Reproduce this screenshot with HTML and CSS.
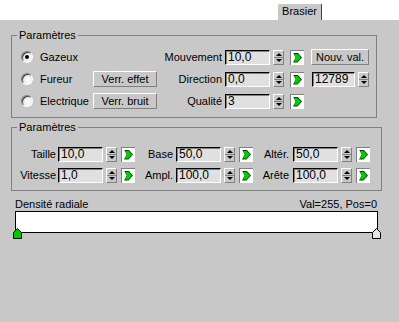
FILE: index.html
```html
<!DOCTYPE html>
<html lang="fr">
<head>
    <meta charset="UTF-8">
    <title>Brasier</title>
    <link rel="stylesheet" href="styles.css">
</head>
<body>

    <!-- Onglet -->
    <div class="tabs">
        <div class="tab">Brasier</div>
    </div>

    <div class="panel">
        <!-- Premier groupe : type et mouvement -->
        <fieldset class="group group-main">
            <legend>Paramètres</legend>
            <div class="row">
                <label class="radio checked"><span class="radio-mark"></span>Gazeux</label>
                <span class="btn-slot"></span>
                <span class="lbl lbl-main">Mouvement</span>
                <span class="field">10,0</span>
                <span class="spin"></span>
                <span class="key"></span>
                <button class="btn btn-new">Nouv. val.</button>
            </div>
            <div class="row">
                <label class="radio"><span class="radio-mark"></span>Fureur</label>
                <button class="btn btn-slot">Verr. effet</button>
                <span class="lbl lbl-main">Direction</span>
                <span class="field">0,0</span>
                <span class="spin"></span>
                <span class="key"></span>
                <span class="field field-seed">12789</span>
                <span class="spin"></span>
            </div>
            <div class="row">
                <label class="radio"><span class="radio-mark"></span>Electrique</label>
                <button class="btn btn-slot">Verr. bruit</button>
                <span class="lbl lbl-main">Qualité</span>
                <span class="field">3</span>
                <span class="spin"></span>
                <span class="key"></span>
            </div>
        </fieldset>

        <!-- Second groupe : tailles -->
        <fieldset class="group group-size">
            <legend>Paramètres</legend>
            <div class="row">
                <span class="lbl lbl-a">Taille</span>
                <span class="field">10,0</span>
                <span class="spin"></span>
                <span class="key"></span>
                <span class="lbl lbl-b">Base</span>
                <span class="field">50,0</span>
                <span class="spin"></span>
                <span class="key"></span>
                <span class="lbl lbl-c">Altér.</span>
                <span class="field">50,0</span>
                <span class="spin"></span>
                <span class="key"></span>
            </div>
            <div class="row">
                <span class="lbl lbl-a">Vitesse</span>
                <span class="field">1,0</span>
                <span class="spin"></span>
                <span class="key"></span>
                <span class="lbl lbl-b">Ampl.</span>
                <span class="field">100,0</span>
                <span class="spin"></span>
                <span class="key"></span>
                <span class="lbl lbl-c">Arête</span>
                <span class="field">100,0</span>
                <span class="spin"></span>
                <span class="key"></span>
            </div>
        </fieldset>

        <!-- Courbe de densité -->
        <div class="density">
            <div class="density-head">
                <span>Densité radiale</span>
                <span>Val=255, Pos=0</span>
            </div>
            <div class="gradient">
                <svg class="marker marker-left" width="9" height="11" viewBox="0 0 9 11">
                    <path d="M0.5 10.5 V4.5 L4.5 0.5 L8.5 4.5 V10.5 Z" fill="#00c800" stroke="#000"/>
                </svg>
                <svg class="marker marker-right" width="9" height="11" viewBox="0 0 9 11">
                    <path d="M0.5 10.5 V4.5 L4.5 0.5 L8.5 4.5 V10.5 Z" fill="#e4e4e4" stroke="#000"/>
                </svg>
            </div>
        </div>
    </div>

</body>
</html>
```

FILE: styles.css
```css
* {
    box-sizing: border-box;
}

body {
    margin: 0;
    background: #fff;
    font-family: "Liberation Sans", Arial, sans-serif;
    font-size: 11px;
    color: #000;
}

/* Onglet */
.tabs {
    height: 20px;
    padding-left: 277px;
    display: flex;
    align-items: flex-end;
}

.tab {
    width: 45px;
    height: 17px;
    background: #c8c8c8;
    border: 1px solid #fff;
    border-right-color: #404040;
    border-bottom: none;
    border-radius: 2px 2px 0 0;
    text-align: center;
    line-height: 15px;
}

.panel {
    height: 302px;
    background: #c8c8c8;
    padding: 9px 0 0 11px;
}

/* Groupes */
.group {
    margin: 0;
    border: 1px solid #808080;
    display: flex;
    flex-direction: column;
    gap: 5px;
}

.group legend {
    padding: 0 2px;
    line-height: 13px;
}

.group-main {
    width: 366px;
    padding: 7px 0 8px 9px;
    gap: 6px;
}

.group-main legend {
    margin-left: -4px;
}

.group-size {
    width: 371px;
    margin-top: 3px;
    padding: 12px 0 7px 0;
}

.group-size legend {
    margin-left: 5px;
}

.row {
    display: flex;
    align-items: center;
    height: 16px;
}

.lbl {
    text-align: right;
    white-space: nowrap;
}

.lbl-main {
    width: 65px;
    margin-right: 3px;
}

.lbl-a {
    width: 44px;
    margin-right: 2px;
}

.lbl-b {
    width: 37px;
    margin-left: 1px;
    margin-right: 3px;
}

.lbl-c {
    width: 35px;
    margin-left: 1px;
    margin-right: 4px;
}

/* Boutons radio */
.radio {
    width: 72px;
    display: flex;
    align-items: center;
    gap: 7px;
}

.radio-mark {
    width: 12px;
    height: 12px;
    border-radius: 50%;
    border: 1px solid;
    border-color: #808080 #fff #fff #808080;
    background: radial-gradient(circle at 60% 60%, #fff 0, #e8e8e8 60%, #d0d0d0 100%);
    box-shadow: inset 1px 1px 0 #404040;
    display: flex;
    align-items: center;
    justify-content: center;
}

.radio.checked .radio-mark::after {
    content: "";
    width: 4px;
    height: 4px;
    border-radius: 50%;
    background: #000;
}

/* Boutons */
.btn-slot {
    width: 64px;
}

.btn {
    height: 16px;
    padding: 0;
    font: inherit;
    color: #000;
    background: #c8c8c8;
    border: 1px solid;
    border-color: #fff #808080 #808080 #fff;
    line-height: 13px;
}

.btn-new {
    width: 58px;
    margin-left: 7px;
}

/* Champs numériques */
.field {
    width: 45px;
    height: 15px;
    padding-left: 2px;
    background: #e0e0e0;
    border: 1px solid;
    border-color: #000 #fff #fff #000;
    box-shadow: inset 1px 1px 0 #808080;
    font-size: 12px;
    line-height: 13px;
}

.field-seed {
    width: 43px;
    margin-left: 8px;
}

.spin {
    width: 11px;
    height: 15px;
    margin-left: 3px;
    border: 1px solid;
    border-color: #fff #808080 #808080 #fff;
    background:
        linear-gradient(#808080, #808080) center / 100% 1px no-repeat,
        #c8c8c8;
    position: relative;
}

.spin::before,
.spin::after {
    content: "";
    position: absolute;
    left: 2px;
    border-left: 3px solid transparent;
    border-right: 3px solid transparent;
}

.spin::before {
    top: 2px;
    border-bottom: 3px solid #000;
}

.spin::after {
    bottom: 2px;
    border-top: 3px solid #000;
}

/* Bouton clé d'animation */
.key {
    width: 14px;
    height: 15px;
    margin-left: 4px;
    background: #fff;
    border-left: 1px solid #808080;
    border-top: 1px solid #808080;
    position: relative;
}

.group-main .key {
    margin-left: 6px;
}

.key::before {
    content: "";
    position: absolute;
    left: 2px;
    top: 2px;
    width: 9px;
    height: 10px;
    background: #004800;
    clip-path: polygon(0 0, 50% 0, 100% 50%, 50% 100%, 0 100%, 30% 50%);
}

.key::after {
    content: "";
    position: absolute;
    left: 3px;
    top: 3px;
    width: 7px;
    height: 8px;
    background: #00d000;
    clip-path: polygon(0 0, 45% 0, 100% 50%, 45% 100%, 0 100%, 30% 50%);
}

/* Courbe de densité */
.density {
    width: 366px;
    margin-top: 6px;
    padding-left: 4px;
}

.density-head {
    display: flex;
    justify-content: space-between;
    line-height: 13px;
    padding-top: 1px;
}

.gradient {
    width: 363px;
    height: 22px;
    background: #fff;
    border: 1px solid #000;
    position: relative;
}

.marker {
    position: absolute;
    bottom: -7px;
}

.marker-left {
    left: -3px;
}

.marker-right {
    right: -4px;
}
```
